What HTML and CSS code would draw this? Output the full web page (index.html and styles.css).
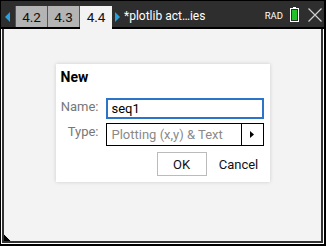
FILE: index.html
```html
<!DOCTYPE html>
<html lang="en">
<head>
  <meta charset="UTF-8">
  <title>New</title>
  <link rel="stylesheet" href="styles.css">
</head>
<body>
  <div class="device">
    <div class="topbar">
      <svg class="arrow arrow-left" width="5" height="10" viewBox="0 0 5 10"><path d="M5 0 L0 5 L5 10 Z" fill="#2aa0da"/></svg>
      <div class="tab first">4.2</div>
      <div class="tab">4.3</div>
      <div class="tab active">4.4</div>
      <svg class="arrow arrow-right" width="5" height="10" viewBox="0 0 5 10"><path d="M0 0 L5 5 L0 10 Z" fill="#2aa0da"/></svg>
      <div class="doc-title">*plotlib act…ies</div>
      <div class="mode">RAD</div>
      <svg class="battery" width="9" height="15" viewBox="0 0 9 15">
        <rect x="3" y="0" width="3" height="2" fill="#fff"/>
        <rect x="0.5" y="1.5" width="8" height="13" fill="none" stroke="#fff"/>
        <rect x="2" y="3" width="5" height="10" fill="#22c02a"/>
      </svg>
      <svg class="close" width="14" height="14" viewBox="0 0 14 14"><path d="M0.5 0.5 L13.5 13.5 M13.5 0.5 L0.5 13.5" stroke="#cfcfcf" stroke-width="1.2"/></svg>
    </div>

    <div class="frame">
      <div class="main">
        <div class="dialog">
          <div class="dialog-title">New</div>
          <div class="form">
            <label class="label" for="name">Name:</label>
            <input class="name-input" id="name" type="text" value="seq1">
            <div class="label">Type:</div>
            <div class="select">
              <span class="select-text">Plotting (x,y) &amp; Text</span>
              <span class="select-btn">
                <svg width="4" height="7" viewBox="0 0 4 7"><path d="M0 0 L4 3.5 L0 7 Z" fill="#000"/></svg>
              </span>
            </div>
          </div>
          <div class="buttons">
            <button class="btn btn-ok">OK</button>
            <button class="btn btn-cancel">Cancel</button>
          </div>
        </div>
        <svg class="corner" width="7" height="7" viewBox="0 0 7 7"><path d="M0 0 L0 7 L7 7 Z" fill="#000"/><path d="M0 0 L7 7" stroke="#fff" stroke-width="0.8"/></svg>
      </div>
    </div>
  </div>
</body>
</html>
```

FILE: styles.css
```css
body {
  margin: 0;
  background: #000;
  font-family: Roboto, "Liberation Sans", sans-serif;
}
.device {
  width: 326px;
  height: 246px;
  box-sizing: border-box;
  padding: 1px 2px 2px 1px;
  background: #000;
  display: flex;
  flex-direction: column;
}
.topbar {
  height: 28px;
  flex: none;
  display: flex;
  align-items: flex-end;
  background: linear-gradient(#2e2e2e 26px, #000 26px);
}
.arrow {
  flex: none;
  margin-bottom: 7px;
}
.arrow-left {
  margin-left: 4px;
  margin-right: 5px;
}
.arrow-right {
  margin-left: 3px;
}
.tab {
  box-sizing: border-box;
  width: 32px;
  height: 21px;
  margin-bottom: 2px;
  background: #b4b4b4;
  border-right: 1px solid #555;
  color: #111;
  font-size: 13.5px;
  line-height: 22px;
  text-align: center;
}
.tab.first {
  width: 33px;
  border-left: 1px solid #555;
}
.tab.active {
  height: 23px;
  margin-bottom: 0;
  background: #f3f3f3;
  border-right: none;
  line-height: 22px;
}
.doc-title {
  margin-left: 4px;
  margin-bottom: 6px;
  color: #fff;
  font-size: 12px;
  line-height: 14px;
  white-space: nowrap;
}
.mode {
  margin-left: auto;
  margin-bottom: 8px;
  color: #fff;
  font-size: 9.5px;
  line-height: 10px;
}
.battery {
  flex: none;
  margin-left: 7px;
  margin-bottom: 7px;
}
.close {
  flex: none;
  margin-left: 9px;
  margin-right: 2px;
  margin-bottom: 7px;
}
.frame {
  flex: 1;
  display: flex;
  border: 1px solid #fff;
  border-top: none;
}
.main {
  flex: 1;
  position: relative;
  display: flex;
  justify-content: center;
  align-items: flex-start;
  padding-top: 35px;
  background: #f3f3f3;
  border: 2px solid #333;
  border-top: none;
}
.dialog {
  width: 214px;
  box-sizing: border-box;
  padding: 5px 6px 6px 5px;
  background: #fff;
  box-shadow: 0 0 4px rgba(0, 0, 0, 0.16);
}
.dialog-title {
  font-size: 14px;
  font-weight: bold;
  line-height: 16px;
  color: #000;
}
.form {
  margin-top: 13px;
  display: grid;
  grid-template-columns: 38px 158px;
  column-gap: 7px;
  row-gap: 4px;
}
.label {
  align-self: start;
  text-align: right;
  color: #777;
  font-size: 13px;
  line-height: 18px;
  white-space: nowrap;
}
.name-input {
  box-sizing: border-box;
  width: 158px;
  height: 21px;
  margin: 0;
  padding: 0 4px;
  border: 2px solid #2b74c7;
  outline: none;
  font-family: Roboto, "Liberation Sans", sans-serif;
  font-size: 13px;
  color: #000;
  background: #fff;
}
.select {
  box-sizing: border-box;
  height: 23px;
  display: flex;
  border: 1px solid #000;
  background: #fff;
}
.select-text {
  flex: 1;
  padding-left: 5px;
  color: #8a8a8a;
  font-size: 13px;
  line-height: 21px;
  white-space: nowrap;
}
.select-btn {
  width: 21px;
  display: flex;
  align-items: center;
  justify-content: center;
  border-left: 1px solid #000;
}
.buttons {
  margin-top: 6px;
  display: flex;
  justify-content: flex-end;
  gap: 7px;
}
.btn {
  box-sizing: border-box;
  width: 50px;
  height: 24px;
  padding: 0;
  background: #fff;
  border: 1px solid #bbb;
  font-family: Roboto, "Liberation Sans", sans-serif;
  font-size: 13px;
  color: #111;
}
.btn-cancel {
  border-color: transparent;
}
.corner {
  position: absolute;
  left: 0;
  bottom: 0;
}
```
